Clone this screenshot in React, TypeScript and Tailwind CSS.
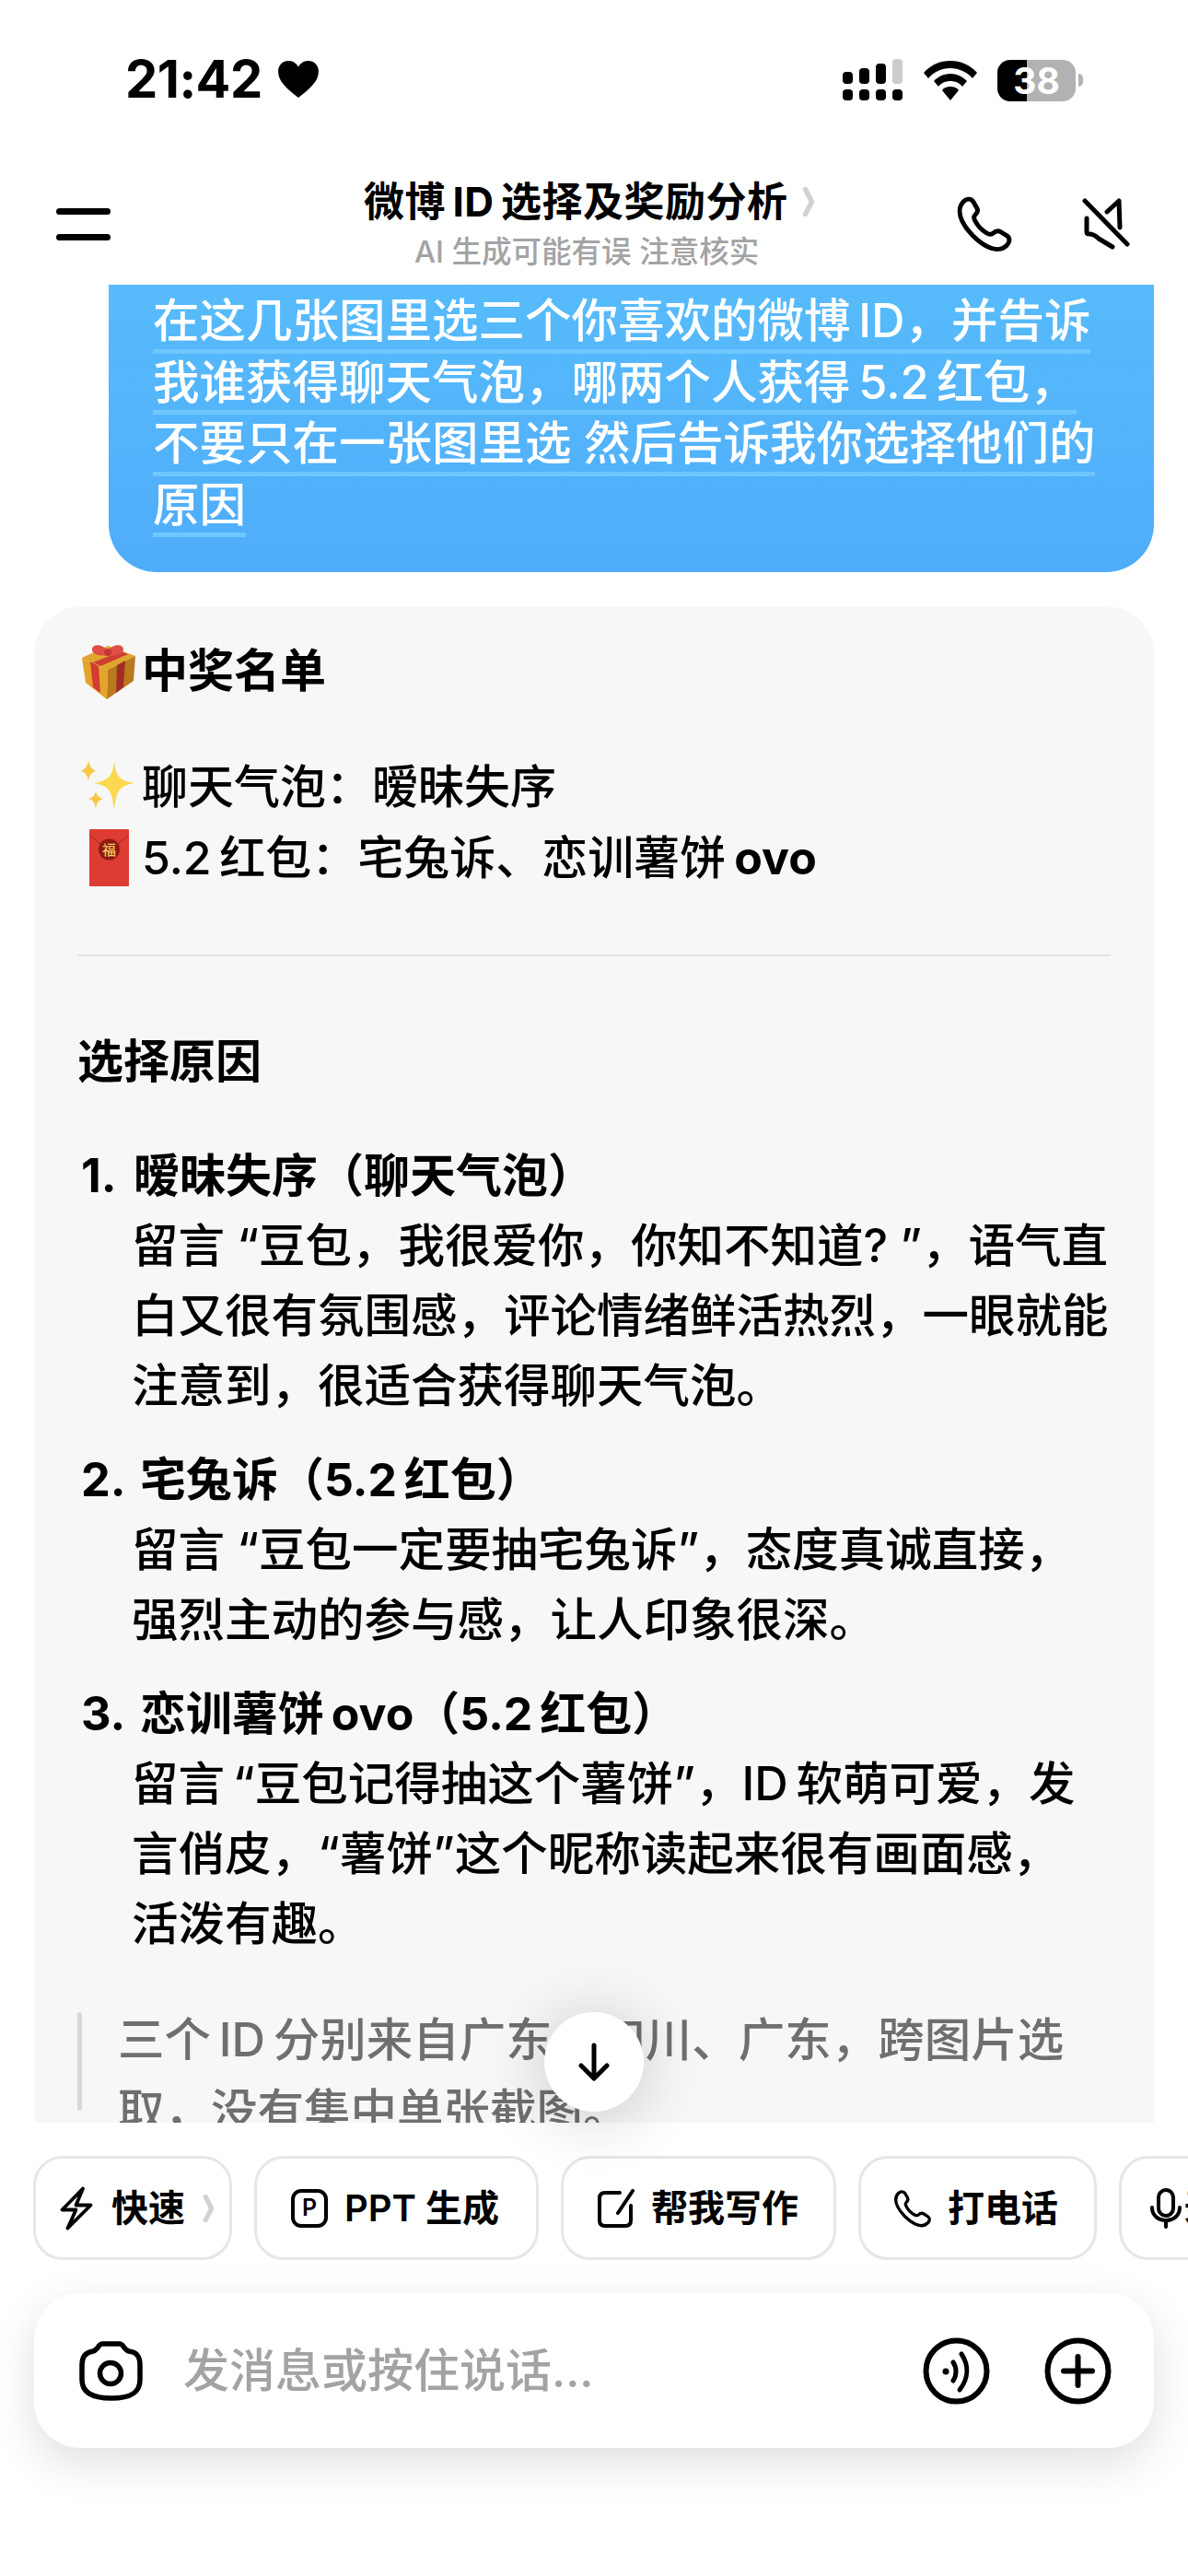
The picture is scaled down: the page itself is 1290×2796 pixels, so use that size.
import { ReactNode } from "react";

const FONT = "font-['Inter','Noto_Sans_CJK_SC',sans-serif]";

const bubbleLines = [
  "在这几张图里选三个你喜欢的微博\u2009ID，并告诉",
  "我谁获得聊天气泡，哪两个人获得\u20095.2\u2009红包，",
  "不要只在一张图里选 然后告诉我你选择他们的",
  "原因",
];

const reasons = [
  {
    no: "1.",
    numWidth: "w-[61px]",
    title: "暧昧失序（聊天气泡）",
    lines: ["留言\u2009\u200a“豆包，我很爱你，你知不知道?\u2009\u200a”，语气直", "白又很有氛围感，评论情绪鲜活热烈，一眼就能", "注意到，很适合获得聊天气泡。"],
  },
  {
    no: "2.",
    numWidth: "w-[68px]",
    title: "宅兔诉（5.2\u2009红包）",
    lines: ["留言\u2009\u200a“豆包一定要抽宅兔诉”，态度真诚直接，", "强烈主动的参与感，让人印象很深。"],
  },
  {
    no: "3.",
    numWidth: "w-[68px]",
    title: "恋训薯饼\u2009ovo（5.2\u2009红包）",
    lines: ["留言\u2009“豆包记得抽这个薯饼”，ID\u2009软萌可爱，发", "言俏皮，“薯饼”这个昵称读起来很有画面感，", "活泼有趣。"],
  },
];

function Signal() {
  return (
    <svg width="66" height="46" viewBox="0 0 66 46">
      <rect x="0" y="14" width="11" height="13" rx="4" fill="#000" />
      <rect x="18" y="10" width="11" height="17" rx="4" fill="#000" />
      <rect x="36" y="5" width="11" height="22" rx="4" fill="#000" />
      <rect x="54" y="0" width="11" height="27" rx="4" fill="#ccc" />
      <rect x="0" y="33" width="11" height="12" rx="4" fill="#000" />
      <rect x="18" y="33" width="11" height="12" rx="4" fill="#000" />
      <rect x="36" y="33" width="11" height="12" rx="4" fill="#000" />
      <rect x="54" y="33" width="11" height="12" rx="4" fill="#000" />
    </svg>
  );
}

function Wifi() {
  return (
    <svg width="58" height="43" viewBox="0 0 58 43">
      <path d="M29 0C18 0 8 4 0 13l5 6c6-7 15-11 24-11s18 4 24 11l5-6C50 4 40 0 29 0z" fill="#000" />
      <path d="M29 14c-7 0-13 3-18 8l5 6c3-4 8-6 13-6s10 2 13 6l5-6c-5-5-11-8-18-8z" fill="#000" />
      <path d="M29 28c-4 0-7 1-9 4l9 11 9-11c-2-3-5-4-9-4z" fill="#000" />
    </svg>
  );
}

function Battery() {
  return (
    <div className="relative flex h-[45px] w-[94px] items-center">
      <div className="flex h-[45px] w-[85px] overflow-hidden rounded-[14px]">
        <div className="w-[32px] bg-black" />
        <div className="flex-1 bg-[#b2b2b2]" />
      </div>
      <div className="ml-[3px] h-[14px] w-[5px] rounded-r-full bg-[#b2b2b2]" />
      <span className="absolute left-0 top-0 w-[85px] text-center text-[39px] font-bold leading-[45px] text-white font-['Inter',sans-serif]">
        38
      </span>
    </div>
  );
}

function PhoneGlyph({ size, stroke = 2 }: { size: number; stroke?: number }) {
  return (
    <svg width={size} height={size} viewBox="0 0 24 24" fill="none" stroke="#000" strokeWidth={stroke} strokeLinejoin="round" strokeLinecap="round">
      <path d="M3.2 2.6C4.6 1.2 6.4 1.3 7.3 2.7L8.800 5.300C9.400 6.400 9 7.400 8.100 8.200 7.400 8.900 7.500 9.800 8.100 10.800 9.300 13.100 11 14.800 13.200 16 14.200 16.500 15 16.600 15.700 15.900 16.600 15 17.600 14.700 18.700 15.300L21.300 16.900C22.800 17.800 22.800 19.600 21.400 21 19.500 22.900 16.500 23.200 13.300 21.600 9.300 19.600 4.600 15 2.600 10.800 1.100 7.600 1.300 4.500 3.200 2.600Z" />
    </svg>
  );
}

function MuteIcon() {
  return (
    <svg width="52" height="56" viewBox="0 0 52 56" fill="none" stroke="#000" strokeWidth="5" strokeLinecap="round" strokeLinejoin="round">
      <path d="M3 3L49 50" />
      <path d="M27 15L40 3 41 32" />
      <path d="M5 22V37C5 39 6 39 8 39 12 39 15 41 18 44L33 53" />
    </svg>
  );
}

function Chevron({ width, height }: { width: number; height: number }) {
  return (
    <svg width={width} height={height} viewBox="0 0 14 34" fill="none" stroke="#d2d2d2" strokeWidth="5.500" strokeLinecap="round" strokeLinejoin="round">
      <path d="M3.500 3.500L10.500 17 3.500 30.500" />
    </svg>
  );
}

function Gift() {
  return (
    <svg width="62" height="62" viewBox="0 0 62 62">
      <path d="M2 17L30 4 60 15 30 30Z" fill="#e0a52e" />
      <path d="M2 17L30 30 29 62 6 44Z" fill="#e2a42c" />
      <path d="M30 30L60 15 58 42 29 62Z" fill="#b9791d" />
      <path d="M11 21L20 26 22 55 14 49Z" fill="#d43c30" />
      <path d="M40 25L49 20 47 49 39 55Z" fill="#a22d25" />
      <path d="M14 22L44 10 52 13 22 26Z" fill="#cf3e33" />
      <path d="M30 10C26 2 14 1 13 7 12 13 22 16 30 14 38 16 48 13 47 7 46 1 34 2 30 10Z" fill="#e04f46" />
      <circle cx="30" cy="11" r="4" fill="#c7362e" />
    </svg>
  );
}

function Sparkles() {
  return (
    <svg width="60" height="58" viewBox="0 0 60 58">
      <path d="M37 2C39 18 43 22 59 25 43 28 39 32 37 56 35 32 31 28 15 25 31 22 35 18 37 2Z" fill="#fbd84f" />
      <path d="M9 0C10 7 12 9 17 12 12 14 10 16 9 23 8 16 6 14 1 12 6 9 8 7 9 0Z" fill="#f7c843" />
      <path d="M17 33C18 38 19 40 25 42 19 44 18 46 17 54 16 46 15 44 9 42 15 40 16 38 17 33Z" fill="#f7c843" />
    </svg>
  );
}

function RedEnvelope() {
  return (
    <svg width="43" height="62" viewBox="0 0 43 62">
      <rect x="0" y="0" width="43" height="62" rx="1" fill="#dc3c32" />
      <path d="M0 6L21.500 24 43 6" fill="none" stroke="#a8261f" strokeWidth="1" />
      <circle cx="21.500" cy="22" r="11.500" fill="#8f1a14" />
      <text x="21.500" y="28" textAnchor="middle" fontSize="15" fill="#f2c75c" fontFamily="'Noto Sans CJK SC',sans-serif">福</text>
    </svg>
  );
}

function Chip({ icon, label, className, children }: { icon: ReactNode; label: string; className: string; children?: ReactNode }) {
  return (
    <div className={`flex h-[113px] shrink-0 items-center rounded-[32px] border-[3px] border-[#e6e6e6] bg-white text-[40px] font-semibold text-black ${className}`}>
      {icon}
      <span className="whitespace-nowrap">{label}</span>
      {children}
    </div>
  );
}

export default function App() {
  return (
    <div className={`relative flex h-[2796px] w-[1290px] flex-col overflow-hidden bg-white text-black ${FONT}`}>
      {/* status bar */}
      <div className="flex h-[176px] shrink-0 items-start justify-between pl-[136px] pr-[113px] pt-[60px]">
        <div className="flex items-center gap-[17px]">
          <span className="text-[56px] font-bold leading-[52px] tracking-[-0.5px]">21:42</span>
          <svg width="44" height="40" viewBox="0 0 46 42">
            <path d="M23 42C9 31 0 23 0 12 0 5 5 0 12 0c5 0 9 3 11 7 2-4 6-7 11-7 7 0 12 5 12 12 0 11-9 19-23 30z" fill="#000" />
          </svg>
        </div>
        <div className="flex items-center gap-[22px] pt-[4px]">
          <Signal />
          <Wifi />
          <Battery />
        </div>
      </div>

      {/* nav */}
      <div className="flex h-[133px] shrink-0 items-start">
        <div className="flex w-[355px] shrink-0 flex-col gap-[21px] pl-[61px] pt-[50px]">
          <div className="h-[7px] w-[59px] rounded-full bg-black" />
          <div className="h-[7px] w-[59px] rounded-full bg-black" />
        </div>
        <div className="flex w-[520px] shrink-0 flex-col items-start pl-[40px]">
          <div className="flex items-center gap-[16px] pt-[17px]">
            <span className="whitespace-nowrap text-[44px] font-bold leading-[52px] tracking-[0.5px]">微博{"\u2009"}ID{"\u2009"}选择及奖励分析</span>
            <Chevron width={14} height={34} />
          </div>
          <span className="whitespace-nowrap pl-[55px] pt-[9px] text-[32.5px] font-medium leading-[40px] text-[#a3a3a3]">AI 生成可能有误 注意核实</span>
        </div>
        <div className="flex items-center gap-[75px] pl-[163px] pt-[36px]">
          <PhoneGlyph size={62} stroke={1.9} />
          <MuteIcon />
        </div>
      </div>

      {/* chat */}
      <div className="h-[1995px] shrink-0 overflow-hidden">
        <div className="ml-[118px] w-[1135px] rounded-b-[52px] bg-gradient-to-b from-[#57bbfb] to-[#4facfa] pb-[38px] pl-[48px] pt-[8px]">
          {bubbleLines.map(line => (
            <div key={line} className="w-fit border-b-[5px] border-[#6fc7fc] text-[50.5px] font-medium leading-[62px] text-white">
              <span className="block h-[61.5px]">{line}</span>
            </div>
          ))}
        </div>

        <div className="ml-[37px] mt-[37px] w-[1216px] rounded-t-[52px] bg-[#f7f7f7] pl-[47px] pt-[32px]">
          <div className="flex h-[76px] items-center text-[50px] font-bold leading-[76px]">
            <span className="flex w-[70px] shrink-0 pl-[3px]"><Gift /></span>
            中奖名单
          </div>
          <div className="mt-[49px] flex h-[77px] items-center text-[50px] font-medium leading-[76px]">
            <span className="flex w-[70px] shrink-0 pl-[3px]"><Sparkles /></span>
            聊天气泡：暧昧失序
          </div>
          <div className="flex h-[77px] items-center text-[50px] font-medium leading-[76px]">
            <span className="flex w-[70px] shrink-0 pl-[13px]"><RedEnvelope /></span>
            5.2{"\u2009"}红包：宅兔诉、恋训薯饼<b className="ml-[9px] font-bold">ovo</b>
          </div>
          <div className="mr-[47px] mt-[67px] h-[2px] bg-[#e3e3e3]" />
          <div className="mt-[76px] text-[50px] font-bold leading-[76px]">选择原因</div>
          <div className="mt-[48px] flex flex-col gap-[26px]">
            {reasons.map(r => (
              <div key={r.no} className="text-[50.5px] font-medium leading-[76px]">
                <div className="flex font-bold">
                  <span className={`${r.numWidth} pl-[4px]`}>{r.no}</span>
                  <span className="text-[50px]">{r.title}</span>
                </div>
                {r.lines.map(line => (
                  <div key={line} className="pl-[59px]">{line}</div>
                ))}
              </div>
            ))}
          </div>
          <div className="mt-[49px] flex gap-[39px] pb-[20px]">
            <div className="mt-[9px] h-[107px] w-[5px] rounded-full bg-[#d8d8d8]" />
            <div className="text-[50.5px] font-medium leading-[77px] text-[#6f6f6f]">
              三个{"\u2009"}ID{"\u2009"}分别来自广东、四川、广东，跨图片选<br />取，没有集中单张截图。
            </div>
          </div>
        </div>
      </div>

      {/* scroll to bottom */}
      <div className="absolute left-[591px] top-[2184px] flex h-[108px] w-[108px] items-center justify-center rounded-full bg-white shadow-[0_6px_70px_rgba(0,0,0,0.2)]">
        <svg width="36" height="42" viewBox="0 0 36 42" fill="none" stroke="#000" strokeWidth="5" strokeLinecap="round" strokeLinejoin="round">
          <path d="M18 3V39M4 25L18 39 32 25" />
        </svg>
      </div>

      {/* shortcuts */}
      <div className="mt-[36px] flex shrink-0 gap-[24px] pl-[36px]">
        <Chip
          className="w-[216px] gap-[19px] pl-[26px]"
          label="快速"
          icon={
            <svg width="37" height="50" viewBox="-1.500 -1.500 37 50" fill="none" stroke="#000" strokeWidth="3.800" strokeLinejoin="round" strokeLinecap="round">
              <path d="M23.500 2L1 25H16L7 45 32 20H16Z" />
            </svg>
          }
        >
          <Chevron width={13} height={32} />
        </Chip>
        <Chip
          className="w-[309px] gap-[18px] pl-[37px]"
          label="PPT 生成"
          icon={
            <div className="flex h-[42px] w-[40px] items-center justify-center rounded-[11px] border-[4px] border-black text-[25px] font-semibold leading-none">P</div>
          }
        />
        <Chip
          className="w-[299px] gap-[18px] pl-[37px]"
          label="帮我写作"
          icon={
            <svg width="40" height="42" viewBox="0 0 40 42" fill="none" stroke="#000" strokeWidth="4" strokeLinecap="round" strokeLinejoin="round">
              <path d="M24 4H8C4 4 2 6 2 10V34C2 38 4 40 8 40H30C34 40 36 38 36 34V18" />
              <path d="M38 2L22 26" />
            </svg>
          }
        />
        <Chip className="w-[259px] gap-[17px] pl-[35px]" label="打电话" icon={<PhoneGlyph size={42} stroke={1.9} />} />
        <Chip
          className="w-[256px] gap-[2px] pl-[31px]"
          label="录音"
          icon={
            <svg width="34" height="44" viewBox="0 0 34 44" fill="none" stroke="#000" strokeWidth="4" strokeLinecap="round">
              <rect x="9" y="2" width="16" height="28" rx="8" />
              <path d="M2 21C2 30 9 35 17 35S32 30 32 21M17 35V42" />
            </svg>
          }
        />
      </div>

      {/* input */}
      <div className="ml-[37px] mt-[36px] flex h-[168px] w-[1216px] shrink-0 items-center rounded-[50px] bg-white pl-[49px] pr-[46px] shadow-[0_16px_50px_rgba(0,0,0,0.13)]">
        <svg width="69" height="65" viewBox="0 0 69 65" fill="none" stroke="#000" strokeWidth="5.500" strokeLinejoin="round">
          <path d="M25 3H44C48 3 49 10 54 11 62 12 66 16 66 26V42C66 56 56 62 35 62 14 62 3 56 3 42V26C3 16 8 12 15 11 20 10 21 3 25 3Z" />
          <circle cx="34" cy="35" r="11.500" />
        </svg>
        <span className="ml-[44px] flex-1 text-[50px] font-medium text-[#a3a3a3]">发消息或按住说话...</span>
        <svg width="73" height="73" viewBox="0 0 73 73" fill="none" stroke="#000" strokeWidth="6" strokeLinecap="round">
          <circle cx="36.500" cy="36.500" r="33" />
          <circle cx="25" cy="37" r="3.500" fill="#000" stroke="none" />
          <path d="M33 27C37 33 37 41 33 47" strokeWidth="5" />
          <path d="M42 18C50 30 50 44 40 57" strokeWidth="5" />
        </svg>
        <svg className="ml-[59px]" width="73" height="73" viewBox="0 0 73 73" fill="none" stroke="#000" strokeWidth="6" strokeLinecap="round">
          <circle cx="36.500" cy="36.500" r="33" />
          <path d="M36.500 21V52M21 36.500H52" />
        </svg>
      </div>
    </div>
  );
}
